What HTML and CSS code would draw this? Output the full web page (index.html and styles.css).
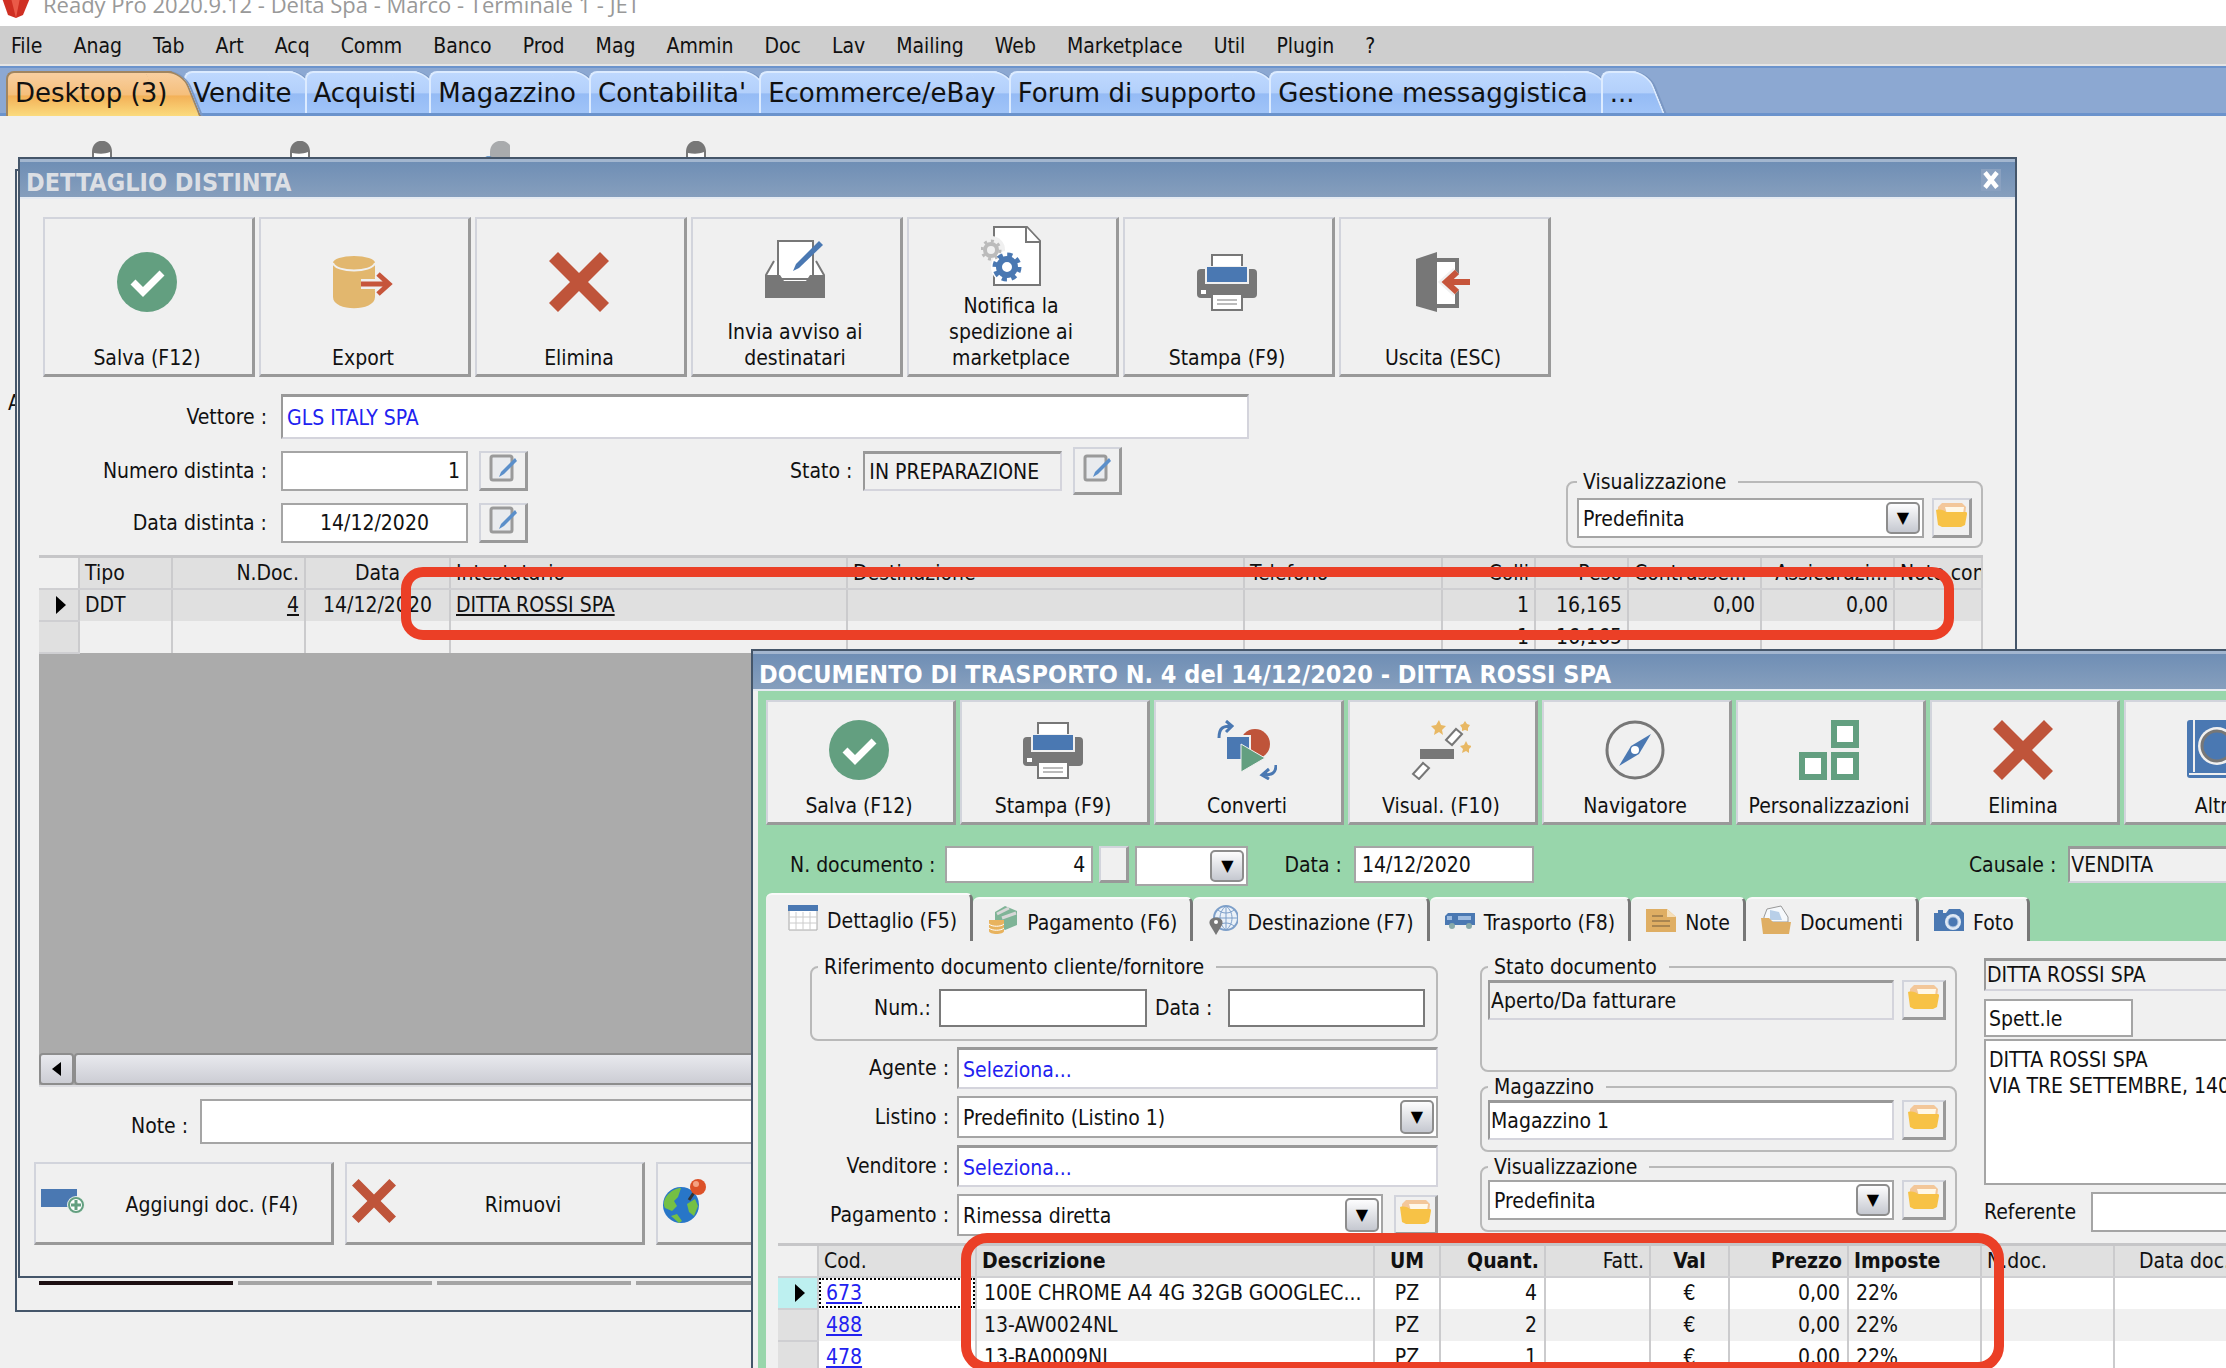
FILE: index.html
```html
<!DOCTYPE html>
<html lang="it">
<head>
  <meta charset="UTF-8" />
  <meta name="viewport" content="width=device-width, initial-scale=1.0"/>
  <title>Ready Pro 2020.9.12 - Delta Spa</title>
  <link rel="stylesheet" href="styles.css">
</head>
<body>
  <!-- shared icons -->
  <svg class="sprite" aria-hidden="true">
    <symbol id="i-check" viewBox="0 0 60 60">
      <circle cx="30" cy="30" r="30" fill="#639f80"/>
      <path d="M16 30l10 10 19-19" fill="none" stroke="#fff" stroke-width="7"/>
    </symbol>
    <symbol id="i-cross" viewBox="0 0 60 60">
      <path d="M9 0L30 21 51 0l9 9-21 21 21 21-9 9-21-21L9 60 0 51l21-21L0 9z" fill="#bf543a"/>
    </symbol>
    <symbol id="i-export" viewBox="0 0 60 60">
      <path d="M0 11v34c0 15 42 15 42 0V11z" fill="#e2b76e"/>
      <ellipse cx="21" cy="11" rx="21" ry="7" fill="#e2b76e"/>
      <path d="M0 11c3 10 39 10 42 0" fill="none" stroke="#f0f0f0" stroke-width="2"/>
      <path d="M28 32h27M45 22l11 10-11 10" fill="none" stroke="#f0f0f0" stroke-width="10"/>
      <path d="M28 32h27M45 22l11 10-11 10" fill="none" stroke="#c6553b" stroke-width="5"/>
    </symbol>
    <symbol id="i-tray" viewBox="0 0 60 60">
      <path d="M9 22L1 36v22h58V36l-8-14" fill="#fff" stroke="#777" stroke-width="2"/>
      <path d="M13 40V2h35v38z" fill="#fff" stroke="#777" stroke-width="2"/>
      <path d="M1 36h14l4 6h22l4-6h14v22H1z" fill="#777"/>
      <path d="M54 2l4 4-24 23-6 3 3-7z" fill="#4a78b2"/>
    </symbol>
    <symbol id="i-gears" viewBox="0 0 60 60">
      <path d="M13 1h33l13 14v44H13z" fill="#fff" stroke="#777" stroke-width="2"/>
      <path d="M45 1v15h14" fill="#fff" stroke="#777" stroke-width="2"/>
      <circle cx="10" cy="24" r="14" fill="#f0f0f0"/>
      <circle cx="26" cy="41" r="16" fill="#fff"/>
      <circle cx="10" cy="24" r="6" fill="none" stroke="#bbb" stroke-width="4"/>
      <circle cx="10" cy="24" r="9" fill="none" stroke="#bbb" stroke-width="3" stroke-dasharray="3 4"/>
      <circle cx="26" cy="41" r="8" fill="none" stroke="#4a78b2" stroke-width="6"/>
      <circle cx="26" cy="41" r="12" fill="none" stroke="#4a78b2" stroke-width="5" stroke-dasharray="5 4.4"/>
    </symbol>
    <symbol id="i-print" viewBox="0 0 60 60">
      <path d="M15 20V3h30v17" fill="#fff" stroke="#777" stroke-width="2"/>
      <rect x="0" y="17" width="60" height="29" rx="4" fill="#777"/>
      <path d="M8 14h44v18H8z" fill="#f0f0f0"/>
      <path d="M10 15h40v15H10z" fill="#4a78b2"/>
      <rect x="4" y="38" width="5" height="4" fill="#fff"/>
      <path d="M15 42h30v16H15z" fill="#fff" stroke="#777" stroke-width="2"/>
      <path d="M20 48h20M20 52h20" stroke="#bbb" stroke-width="2"/>
    </symbol>
    <symbol id="i-exit" viewBox="0 0 60 60">
      <path d="M20 8h24v46H20" fill="#fff" stroke="#777" stroke-width="4"/>
      <path d="M3 7L24 0v60L3 54z" fill="#777"/>
      <path d="M56 30H34M44 20L33 30l11 10" fill="none" stroke="#f0f0f0" stroke-width="11"/>
      <path d="M57 30H34M44 20L33 30l11 10" fill="none" stroke="#c6553b" stroke-width="6"/>
    </symbol>
    <symbol id="i-convert" viewBox="0 0 60 60">
      <circle cx="38" cy="24" r="15" fill="#bf543a"/>
      <path d="M9 16h24v24H9z" fill="#4a78b2" stroke="#f0f0f0" stroke-width="2"/>
      <path d="M24 24l24 14-24 14z" fill="#639f80" stroke="#f0f0f0"/>
      <path d="M2 18C2 8 6 6 14 6M9 1l6 5-6 6M59 45c0 8-4 10-12 10M52 49l-7 6 7 4" fill="none" stroke="#4a78b2" stroke-width="3"/>
    </symbol>
    <symbol id="i-wand" viewBox="0 0 60 60">
      <path d="M9 29h34v10H9z" fill="#777"/>
      <path d="M35 20l10-11 6 5-10 11zM2 54l10-11 6 5L8 59z" fill="#fff" stroke="#777" stroke-width="2"/>
      <path d="M28 0l2 5 5 1-4 4 1 5-4-3-5 3 1-5-4-4 5-1zM54 1l2 3 3 1-2 3v3l-3-1-3 1v-3l-2-3 3-1zM55 21l2 4 4 1-3 3v4l-3-2-4 2 1-4-3-3 4-1z" fill="#e8b864"/>
    </symbol>
    <symbol id="i-compass" viewBox="0 0 60 60">
      <circle cx="30" cy="30" r="28" fill="none" stroke="#777" stroke-width="3"/>
      <path d="M46 14L34 34 14 46l12-20z" fill="#4a78b2"/>
      <circle cx="30" cy="30" r="4" fill="#fff"/>
    </symbol>
    <symbol id="i-blocks" viewBox="0 0 60 60">
      <path d="M35 3h22v22H35zM3 35h22v22H3zM35 35h22v22H35z" fill="#fff" stroke="#639f80" stroke-width="6"/>
    </symbol>
    <symbol id="i-safe" viewBox="0 0 60 60">
      <rect width="60" height="58" rx="3" fill="#4a78b2"/>
      <path d="M7 0v52M2 54h58" stroke="#f0f0f0" stroke-width="2"/>
      <circle cx="30" cy="26" r="19" fill="#f0f0f0"/>
      <circle cx="30" cy="26" r="15" fill="#4a78b2" stroke="#777" stroke-width="3"/>
    </symbol>
    <symbol id="i-edit" viewBox="0 0 30 30">
      <rect x="3" y="2" width="21" height="24" rx="2" fill="#e9ebee" stroke="#9a9a9a" stroke-width="3"/>
      <path d="M27 4l2 3-13 13-5 3 2-5z" fill="#5b8fca"/>
    </symbol>
    <symbol id="i-folder" viewBox="0 0 32 26">
      <path d="M2 4l4-4h20l4 4-1 9H2z" fill="#f3c79a"/>
      <path d="M9 4h19l-1 7H11z" fill="#fff8e8"/>
      <path d="M0 7c4-1 8 0 10 2h20c1 0 1 1 1 2l-2 11-4 2H6l-4-2z" fill="#f7c246"/>
    </symbol>
    <symbol id="i-user" viewBox="0 0 30 30">
      <path d="M0 20c2-4 7-4 12 0v10H0z" fill="#4a86c4"/>
      <path d="M8 30V11C8-4 28-4 28 11v19z" fill="#777"/>
      <path d="M10 30V12c6 1 11 1 16-1v19z" fill="#fff"/>
    </symbol>
    <symbol id="i-user-grey" viewBox="0 0 30 30">
      <path d="M10 30V11C10-4 32-4 32 11v19z" fill="#a9abad"/>
      <path d="M0 22c3-9 14-9 17 0v8H0z" fill="#4a86c4"/>
    </symbol>
  </svg>

  <header class="titlebar">
    <svg class="logo" viewBox="0 0 28 20" aria-hidden="true"><path d="M0 0h28l-7 17-7 3-8-3z" fill="#cf2f22"/><path d="M9 0h9l-4 20z" fill="#ea5a48"/></svg>
    <span>Ready Pro 2020.9.12 - Delta Spa - Marco - Terminale 1 - JET</span>
  </header>

  <nav class="menu">
    <button>File</button><button>Anag</button><button>Tab</button><button>Art</button><button>Acq</button><button>Comm</button><button>Banco</button><button>Prod</button><button>Mag</button><button>Ammin</button><button>Doc</button><button>Lav</button><button>Mailing</button><button>Web</button><button>Marketplace</button><button>Util</button><button>Plugin</button><button>?</button>
  </nav>

  <nav class="tabs">
    <button class="tab active">Desktop (3)</button>
    <button class="tab">Vendite</button>
    <button class="tab">Acquisti</button>
    <button class="tab">Magazzino</button>
    <button class="tab">Contabilita'</button>
    <button class="tab">Ecommerce/eBay</button>
    <button class="tab">Forum di supporto</button>
    <button class="tab">Gestione messaggistica</button>
    <button class="tab">...</button>
  </nav>

  <main class="desktop">
    <div class="users">
      <svg><use href="#i-user"/></svg>
      <svg><use href="#i-user"/></svg>
      <svg><use href="#i-user-grey"/></svg>
      <svg><use href="#i-user"/></svg>
    </div>
    <span class="behind-label">A</span>

    <section class="window back">
      <div class="back-buttons"><i></i><i></i><i></i><i></i></div>
    </section>

    <!-- Dettaglio distinta -->
    <section class="window distinta">
      <div class="caption inactive">
        <h2>DETTAGLIO DISTINTA</h2>
        <button class="close" aria-label="Chiudi"><svg viewBox="0 0 12 12"><path d="M2 1l8 10M10 1L2 11" stroke="#fff" stroke-width="3"/></svg></button>
      </div>

      <div class="toolbar">
        <button class="tool"><svg><use href="#i-check"/></svg><span>Salva (F12)</span></button>
        <button class="tool"><svg><use href="#i-export"/></svg><span>Export</span></button>
        <button class="tool"><svg><use href="#i-cross"/></svg><span>Elimina</span></button>
        <button class="tool"><svg><use href="#i-tray"/></svg><span>Invia avviso ai<br>destinatari</span></button>
        <button class="tool"><svg><use href="#i-gears"/></svg><span>Notifica la<br>spedizione ai<br>marketplace</span></button>
        <button class="tool"><svg><use href="#i-print"/></svg><span>Stampa (F9)</span></button>
        <button class="tool"><svg><use href="#i-exit"/></svg><span>Uscita (ESC)</span></button>
      </div>

      <div class="distinta-head">
        <div class="distinta-form">
          <label for="vettore">Vettore :</label>
          <input id="vettore" class="sunken link-text tall" value="GLS ITALY SPA">
          <label for="numero">Numero distinta :</label>
          <div class="line">
            <input id="numero" class="short right" value="1">
            <button class="mini edit" aria-label="Modifica numero"><svg><use href="#i-edit"/></svg></button>
            <div class="line stato">
              <label for="stato">Stato :</label>
              <input id="stato" class="sunken grey" value="IN PREPARAZIONE" readonly>
              <button class="mini edit big" aria-label="Modifica stato"><svg><use href="#i-edit"/></svg></button>
            </div>
          </div>
          <label for="data">Data distinta :</label>
          <div class="line">
            <input id="data" class="short center" value="14/12/2020">
            <button class="mini edit" aria-label="Modifica data"><svg><use href="#i-edit"/></svg></button>
          </div>
        </div>
        <fieldset class="view">
          <legend>Visualizzazione</legend>
          <span class="combo"><select aria-label="Visualizzazione"><option>Predefinita</option></select></span>
          <button class="mini" aria-label="Apri"><svg><use href="#i-folder"/></svg></button>
        </fieldset>
      </div>

      <div class="grid-box">
        <table class="grid">
          <colgroup>
            <col class="w40"><col class="w93"><col class="w133"><col class="w145"><col class="w397"><col class="w397"><col class="w198"><col class="w93"><col class="w93"><col class="w133"><col class="w133"><col>
          </colgroup>
          <thead>
            <tr><th class="corner"></th><th>Tipo</th><th class="right">N.Doc.</th><th class="center">Data</th><th>Intestatario</th><th>Destinazione</th><th>Telefono</th><th class="right">Colli</th><th class="right">Peso</th><th>Contrasse...</th><th class="right">Assicurazi...</th><th>Note con</th></tr>
          </thead>
          <tbody>
            <tr class="selected"><th><i class="arrow"></i></th><td>DDT</td><td class="right"><u>4</u></td><td class="center">14/12/2020</td><td><u>DITTA ROSSI SPA</u></td><td></td><td></td><td class="right">1</td><td class="right">16,165</td><td class="right">0,00</td><td class="right">0,00</td><td></td></tr>
            <tr><th></th><td></td><td></td><td></td><td></td><td></td><td></td><td class="right">1</td><td class="right">16,165</td><td></td><td></td><td></td></tr>
          </tbody>
        </table>
        <div class="hscroll"><button aria-label="Scorri a sinistra"><i></i></button><div class="thumb"></div></div>
      </div>

      <div class="note-row">
        <label for="note">Note :</label>
        <input id="note" class="tall">
      </div>

      <div class="actions">
        <button class="action">
          <svg viewBox="0 0 44 44"><path d="M0 10h36v18H0z" fill="#4a78b2"/><circle cx="35" cy="26" r="9" fill="#e8efe9"/><circle cx="35" cy="26" r="7" fill="#fff" stroke="#639f80" stroke-width="2"/><path d="M35 21v10M30 26h10" stroke="#639f80" stroke-width="3"/></svg>
          <span>Aggiungi doc. (F4)</span>
        </button>
        <button class="action"><svg><use href="#i-cross"/></svg><span>Rimuovi</span></button>
        <button class="action">
          <svg viewBox="0 0 44 44"><circle cx="18" cy="26" r="18" fill="#2876c8"/><path d="M3 18c5-7 11-9 15-9l-3 9-4 4 3 5-5 5-7-3c-2-4-1-8 1-11zM24 25l8-5 3 7-4 10-5-4zM8 37l6-2 5 7-3 2z" fill="#74c044"/><path d="M26 21l8-12" stroke="#333" stroke-width="3"/><circle cx="35" cy="8" r="8" fill="#dc5128"/><circle cx="33" cy="5" r="3" fill="#f4a283"/></svg>
          <span></span>
        </button>
      </div>
    </section>

    <!-- Documento di trasporto -->
    <section class="window documento">
      <div class="caption">
        <h2>DOCUMENTO DI TRASPORTO N. 4 del 14/12/2020 - DITTA ROSSI SPA</h2>
      </div>
      <div class="green">
        <div class="toolbar">
          <button class="tool"><svg><use href="#i-check"/></svg><span>Salva (F12)</span></button>
          <button class="tool"><svg><use href="#i-print"/></svg><span>Stampa (F9)</span></button>
          <button class="tool"><svg><use href="#i-convert"/></svg><span>Converti</span></button>
          <button class="tool"><svg><use href="#i-wand"/></svg><span>Visual. (F10)</span></button>
          <button class="tool"><svg><use href="#i-compass"/></svg><span>Navigatore</span></button>
          <button class="tool"><svg><use href="#i-blocks"/></svg><span>Personalizzazioni</span></button>
          <button class="tool"><svg><use href="#i-cross"/></svg><span>Elimina</span></button>
          <button class="tool"><svg><use href="#i-safe"/></svg><span>Altro</span></button>
        </div>

        <div class="doc-row">
          <label for="ndoc">N. documento :</label>
          <input id="ndoc" class="ndoc right" value="4">
          <button class="mini blank" aria-label="Numerazione"></button>
          <span class="combo serie"><select aria-label="Serie"><option></option></select></span>
          <label for="ddata">Data :</label>
          <input id="ddata" class="ddata" value="14/12/2020">
          <label for="causale">Causale :</label>
          <input id="causale" class="sunken grey flush" value="VENDITA" readonly>
        </div>

        <div class="doc-tabs">
          <button class="doc-tab active"><svg viewBox="0 0 30 30"><path d="M1 3h28v24H1z" fill="#fff" stroke="#aaa"/><path d="M1 9v18M8 9v18M15 9v18M22 9v18M1 14h28M1 20h28" stroke="#ccc"/><path d="M0 2h30v6H0z" fill="#4a78b2"/></svg><span>Dettaglio (F5)</span></button>
          <button class="doc-tab"><svg viewBox="0 0 30 30"><path d="M7 7l10-6 12 5v14l-12 5-10-7z" fill="#7fb497"/><path d="M9 9l12-6M14 13l14-5" stroke="#d7d7d7" stroke-width="3"/><path d="M1 15h15v11c0 4-15 4-15 0z" fill="#e8b35e"/><path d="M1 19c3 3 12 3 15 0M1 23c3 3 12 3 15 0" fill="none" stroke="#fff"/></svg><span>Pagamento (F6)</span></button>
          <button class="doc-tab"><svg viewBox="0 0 30 30"><circle cx="18" cy="13" r="12" fill="#eaf1f8" stroke="#7d9fc9" stroke-width="2"/><path d="M6 13h24M18 1v24M10 5c5 4 11 4 16 0M10 21c5-4 11-4 16 0M18 1c-8 6-8 18 0 24M18 1c8 6 8 18 0 24" fill="none" stroke="#7d9fc9"/><path d="M8 30L2 20c-4-10 16-10 12 0z" fill="#777"/><circle cx="8" cy="17" r="2" fill="#fff"/></svg><span>Destinazione (F7)</span></button>
          <button class="doc-tab"><svg viewBox="0 0 30 30"><path d="M10 8h20v12H10zM0 11l3-3h7v12H0z" fill="#4a78b2"/><path d="M2 11h5v4H2zM13 11h13v4H13z" fill="#9dbbe0"/><circle cx="7" cy="21" r="3" fill="#8aa"/><circle cx="24" cy="21" r="3" fill="#8aa"/></svg><span>Trasporto (F8)</span></button>
          <button class="doc-tab"><svg viewBox="0 0 30 30"><path d="M0 4h21l9 8v15H0z" fill="#dfae63"/><path d="M21 4v8h9z" fill="#f6dfb8"/><path d="M6 11h11M6 16h18M6 21h18" stroke="#a98550" stroke-width="2"/></svg><span>Note</span></button>
          <button class="doc-tab"><svg viewBox="0 0 30 30"><path d="M3 12L6 4l14-3 7 11v5H3z" fill="#f6f9fc" stroke="#999"/><path d="M9 5l9 2 3 8H9z" fill="#b8cfe8"/><path d="M0 13h8l4 4h18l-2 12H2z" fill="#dfae63"/></svg><span>Documenti</span></button>
          <button class="doc-tab"><svg viewBox="0 0 30 30"><path d="M0 8h4V5h5v3h3l3-4h11l4 4v18H0z" fill="#4a78b2"/><circle cx="19" cy="17" r="8" fill="#dfe9f4"/><circle cx="19" cy="17" r="5" fill="#4a78b2" stroke="#aac3e2"/></svg><span>Foto</span></button>
        </div>

        <div class="panel">
          <div class="panel-form">
            <div class="col-ref">
              <fieldset class="ref">
                <legend>Riferimento documento cliente/fornitore</legend>
                <label for="rnum">Num.:</label>
                <input id="rnum" class="dark">
                <label for="rdata">Data :</label>
                <input id="rdata" class="dark">
              </fieldset>
              <div class="rows">
                <label for="agente">Agente :</label>
                <input id="agente" class="sunken link-text" value="Seleziona...">
                <label for="listino">Listino :</label>
                <span class="combo"><select id="listino"><option>Predefinito (Listino 1)</option></select></span>
                <label for="venditore">Venditore :</label>
                <input id="venditore" class="sunken link-text" value="Seleziona...">
                <label for="pagamento">Pagamento :</label>
                <div class="line">
                  <span class="combo"><select id="pagamento"><option>Rimessa diretta</option></select></span>
                  <button class="mini" aria-label="Apri"><svg><use href="#i-folder"/></svg></button>
                </div>
              </div>
            </div>

            <div class="col-state">
              <fieldset class="state">
                <legend>Stato documento</legend>
                <input class="sunken grey flush" aria-label="Stato documento" value="Aperto/Da fatturare" readonly>
                <button class="mini" aria-label="Apri"><svg><use href="#i-folder"/></svg></button>
              </fieldset>
              <fieldset>
                <legend>Magazzino</legend>
                <input class="sunken flush" aria-label="Magazzino" value="Magazzino 1">
                <button class="mini" aria-label="Apri"><svg><use href="#i-folder"/></svg></button>
              </fieldset>
              <fieldset>
                <legend>Visualizzazione</legend>
                <span class="combo"><select aria-label="Visualizzazione"><option>Predefinita</option></select></span>
                <button class="mini" aria-label="Apri"><svg><use href="#i-folder"/></svg></button>
              </fieldset>
            </div>

            <div class="col-customer">
              <input class="sunken grey flush name" aria-label="Cliente" value="DITTA ROSSI SPA" readonly>
              <input class="spett" aria-label="Titolo" value="Spett.le">
              <textarea aria-label="Indirizzo">DITTA ROSSI SPA
VIA TRE SETTEMBRE, 140</textarea>
              <div class="line">
                <label for="referente">Referente</label>
                <input id="referente">
              </div>
            </div>
          </div>

          <table class="grid items">
            <colgroup>
              <col class="w40"><col class="w158"><col class="w398"><col class="w66"><col class="w105"><col class="w105"><col class="w79"><col class="w119"><col class="w133"><col class="w133"><col>
            </colgroup>
            <thead>
              <tr><th class="corner"></th><th>Cod.</th><th><b>Descrizione</b></th><th class="center"><b>UM</b></th><th class="right"><b>Quant.</b></th><th class="right">Fatt.</th><th class="center"><b>Val</b></th><th class="right"><b>Prezzo</b></th><th><b>Imposte</b></th><th>N.doc.</th><th class="doc-date">Data doc.</th></tr>
            </thead>
            <tbody>
              <tr><th class="current"><i class="arrow"></i></th><td class="focus"><a href="#">673</a></td><td>100E CHROME A4 4G 32GB GOOGLEC...</td><td class="center">PZ</td><td class="right">4</td><td></td><td class="center">€</td><td class="right">0,00</td><td>22%</td><td></td><td></td></tr>
              <tr><th></th><td><a href="#">488</a></td><td>13-AW0024NL</td><td class="center">PZ</td><td class="right">2</td><td></td><td class="center">€</td><td class="right">0,00</td><td>22%</td><td></td><td></td></tr>
              <tr><th></th><td><a href="#">478</a></td><td>13-BA0009NL</td><td class="center">PZ</td><td class="right">1</td><td></td><td class="center">€</td><td class="right">0,00</td><td>22%</td><td></td><td></td></tr>
            </tbody>
          </table>
        </div>
      </div>
    </section>

    <div class="mark mark-row"></div>
    <div class="mark mark-items"></div>
  </main>
</body>
</html>
```
FILE: styles.css
```css
* {
  box-sizing: border-box;
}
body {
  margin: 0;
  height: 100vh;
  display: flex;
  flex-direction: column;
  overflow: hidden;
  background: #f0f0f0;
  color: #111;
  font-family: "DejaVu Sans Condensed", "DejaVu Sans", sans-serif;
  font-size: 21px;
  line-height: 26px;
}
button, input, select, textarea {
  font: inherit;
  color: inherit;
  margin: 0;
}
button {
  padding: 0;
  background: none;
  border: none;
}
.sprite {
  display: none;
}
.right {
  text-align: right;
}
.center {
  text-align: center;
}

/* application frame */
.titlebar {
  height: 26px;
  display: flex;
  align-items: flex-end;
  gap: 13px;
  padding: 0 2px 8px;
  background: #fff;
  color: #999;
  font-family: "Open Sans", sans-serif;
  font-size: 22px;
  overflow: hidden;
}
.titlebar span {
  padding-bottom: 1px;
}
.logo {
  width: 28px;
  height: 20px;
}
.menu {
  height: 40px;
  display: flex;
  align-items: center;
  gap: 31px;
  padding: 2px 11px 0;
  background: #cecece;
  border-bottom: 2px solid #e4e4e4;
}
.tabs {
  height: 50px;
  display: flex;
  padding: 3px 6px 0;
  background: #8ca8d2;
  border-top: 2px solid #6b93cc;
  border-bottom: 3px solid #6b93cc;
}
.tab {
  position: relative;
  z-index: 1;
  isolation: isolate;
  padding: 2px 13px 0 9px;
  font-family: "DejaVu Sans", sans-serif;
  font-size: 26px;
  white-space: nowrap;
}
.tab::before, .tab::after {
  content: "";
  position: absolute;
  z-index: -1;
  top: 0;
  bottom: 0;
  background: linear-gradient(#bed8fe, #b3d0fb 50%, #95bbf5 52%, #a0c4f8);
  border-top: 2px solid #dcebff;
}
.tab::before {
  left: 0;
  right: 12px;
  border-left: 2px solid #dcebff;
  border-radius: 8px 0 0 0;
}
.tab::after {
  width: 36px;
  right: -8px;
  border-right: 2px solid #dcebff;
  border-radius: 0 16px 0 0;
  transform: skewX(22deg);
  box-shadow: 2px 0 0 #7b98c4;
}
.tab.active {
  z-index: 2;
  padding-right: 17px;
}
.tab.active::before, .tab.active::after {
  bottom: -3px;
  background: linear-gradient(#f8cfa0, #f5bf7c 50%, #f3b158 54%, #fbdb7e);
  border-color: #a08560;
}

.desktop {
  flex: 1;
  position: relative;
  overflow: hidden;
}
.users {
  display: flex;
  gap: 168px;
  padding: 25px 0 0 84px;
}
.users svg {
  width: 30px;
  height: 30px;
}
.behind-label {
  position: absolute;
  left: 8px;
  top: 274px;
}

/* floating windows */
.window {
  position: absolute;
  background: #f0f0f0;
  border: 2px solid #45566a;
}
.back {
  left: 15px;
  top: 53px;
  width: 1900px;
  height: 1143px;
  display: flex;
  align-items: flex-end;
  padding: 0 22px 25px;
}
.back-buttons {
  display: flex;
  gap: 5px;
}
.back-buttons i {
  width: 194px;
  height: 12px;
  border-bottom: 4px solid #a5a5a5;
}
.back-buttons i:first-child {
  border-color: #1c0f12;
}
.distinta {
  left: 18px;
  top: 41px;
  width: 1999px;
  padding-bottom: 31px;
}
.documento {
  left: 751px;
  top: 533px;
  right: -60px;
}
.caption {
  height: 40px;
  display: flex;
  align-items: center;
  justify-content: space-between;
  padding: 7px 14px 0 6px;
  color: #fff;
  background: linear-gradient(#6f8eb5, #869fbd);
  border-top: 3px solid #a3b6cf;
  border-bottom: 2px solid #e6ebf2;
}
.caption.inactive {
  color: #dcdfe4;
}
.caption h2 {
  margin: 0;
  font-size: 25px;
}
.close {
  width: 20px;
  height: 22px;
  margin-bottom: 6px;
  background: #8aa1c0;
}
.close svg {
  display: block;
  width: 18px;
  height: 18px;
  margin: 0 auto;
}

/* toolbars */
.toolbar {
  display: flex;
  gap: 4px;
  padding: 18px 23px 17px;
}
.tool {
  width: 212px;
  height: 160px;
  flex: none;
  display: flex;
  flex-direction: column;
  align-items: center;
  padding: 0 3px 3px 0;
  background: #f0f0f0;
  border: 2px solid #d2d4dc;
  border-right: 3px solid #999;
  border-bottom: 3px solid #999;
}
.tool svg {
  width: 60px;
  height: 60px;
  margin: auto;
}

/* fields */
input, select, textarea {
  height: 40px;
  min-width: 0;
  padding: 0 6px;
  background: #fff;
  border: 2px solid #a5a5a5;
  border-radius: 0;
  outline: none;
}
.tall {
  height: 45px;
}
.sunken {
  border-color: #999 #d4d4dc #d4d4dc #999;
  border-top-width: 3px;
}
.grey {
  background: #f0f0f0;
}
.flush {
  padding: 0 1px;
}
.dark {
  border-color: #7a7a7a;
}
.link-text {
  padding: 2px 4px 0;
  color: #2222f0;
}
.line {
  display: flex;
  align-items: center;
}
.combo {
  position: relative;
  display: flex;
}
.combo select {
  width: 100%;
  padding: 2px 4px 0;
  appearance: none;
}
.combo::after {
  content: "▼";
  position: absolute;
  right: 4px;
  top: 4px;
  bottom: 4px;
  width: 30px;
  display: flex;
  align-items: center;
  justify-content: center;
  background: linear-gradient(#fdfdfe, #c5c8d0);
  border: 2px solid #8d8d8d;
  border-radius: 5px;
  color: #000;
  font-family: "DejaVu Sans", sans-serif;
  font-size: 16px;
  pointer-events: none;
}
.mini {
  width: 44px;
  height: 40px;
  flex: none;
  display: flex;
  align-items: center;
  justify-content: center;
  padding-bottom: 4px;
  background: #f0f0f0;
  border: 2px solid #d2d4dc;
  border-right: 3px solid #999;
  border-bottom: 3px solid #999;
}
.mini svg {
  width: 32px;
  height: 26px;
}
.mini.edit {
  width: 49px;
}
.mini.edit svg {
  width: 30px;
  height: 30px;
}
.mini.big {
  height: 48px;
  margin: -4px 0;
}
fieldset {
  min-width: 0;
  display: flex;
  gap: 8px;
  margin: 0;
  padding: 0 9px 10px 6px;
  border: 2px solid #b9b9b9;
  border-radius: 8px;
}
legend {
  padding: 0 12px 0 6px;
}
fieldset .combo, fieldset > input {
  flex: 1;
}

/* dettaglio distinta */
.distinta-head {
  display: flex;
  justify-content: space-between;
  align-items: flex-end;
  padding: 0 32px 7px 0;
}
.distinta-form {
  width: 1229px;
  display: grid;
  grid-template-columns: 247px 1fr;
  gap: 12px 14px;
  align-items: center;
  padding-bottom: 5px;
}
.distinta-form > label {
  text-align: right;
}
.distinta-form .line {
  gap: 11px;
}
.short {
  width: 187px;
}
.stato {
  margin-left: 251px;
}
.stato input {
  width: 199px;
  padding: 0 4px;
}
.view {
  width: 417px;
  padding: 3px 9px 8px;
}
.view .mini {
  width: 40px;
}
.grid-box {
  height: 532px;
  display: flex;
  flex-direction: column;
  justify-content: space-between;
  margin: 0 32px 12px 19px;
  background: #ababab;
}
.grid {
  width: 100%;
  table-layout: fixed;
  border-collapse: collapse;
  border-top: 3px solid #c6c6c8;
}
.grid th, .grid td {
  height: 32px;
  padding: 0 5px;
  overflow: hidden;
  white-space: nowrap;
  font-weight: normal;
  text-align: left;
  border-right: 2px solid #cbcbcd;
}
.grid .right {
  text-align: right;
}
.grid .center {
  text-align: center;
}
.grid th {
  background: #e0e0e0;
  border-bottom: 2px solid #cfcfd2;
}
.grid th.corner {
  background: #f0f0f0;
}
.grid td {
  background: #f0f0f0;
}
.grid .selected td {
  background: #e0e0e0;
}
.arrow {
  display: block;
  width: 0;
  margin-left: 12px;
  border: 9px solid transparent;
  border-left: 10px solid #000;
  border-right: 0;
}
.w40 { width: 40px; }
.w66 { width: 66px; }
.w79 { width: 79px; }
.w93 { width: 93px; }
.w105 { width: 105px; }
.w119 { width: 119px; }
.w133 { width: 133px; }
.w145 { width: 145px; }
.w158 { width: 158px; }
.w198 { width: 198px; }
.w397 { width: 397px; }
.w398 { width: 398px; }
.hscroll {
  height: 34px;
  display: flex;
  border-bottom: 2px solid #dcdce0;
}
.hscroll button, .thumb {
  background: linear-gradient(#e8e9ee, #cccdd4);
  border: 2px solid #8d8d8d;
  border-radius: 4px;
}
.hscroll button {
  width: 35px;
  display: flex;
  align-items: center;
  justify-content: center;
}
.hscroll i {
  border: 7px solid transparent;
  border-right: 9px solid #000;
  border-left: 0;
}
.thumb {
  flex: 1;
}
.note-row {
  display: flex;
  align-items: center;
  gap: 12px;
  padding: 0 32px 18px 111px;
}
.note-row label {
  padding-top: 8px;
}
.note-row input {
  flex: 1;
}
.actions {
  display: flex;
  gap: 11px;
  padding-left: 14px;
}
.action {
  width: 300px;
  height: 83px;
  display: flex;
  align-items: center;
  padding: 0 0 4px 5px;
  border: 2px solid #d2d4dc;
  border-right: 3px solid #999;
  border-bottom: 3px solid #999;
}
.action svg {
  width: 44px;
  height: 44px;
}
.action span {
  flex: 1;
  padding: 8px 0 0 8px;
}

/* documento di trasporto */
.green {
  margin-left: 5px;
  background: #98d6ab;
}
.green .toolbar {
  padding: 9px 8px 21px;
}
.green .tool {
  width: 190px;
  height: 125px;
}
.green .tool svg {
  margin: auto auto 13px;
}
.doc-row {
  height: 40px;
  display: flex;
  align-items: flex-start;
  padding-left: 32px;
}
.doc-row label {
  line-height: 38px;
}
.doc-row > input {
  height: 37px;
}
.doc-row .ndoc {
  width: 148px;
  margin: 0 6px 0 10px;
}
.mini.blank {
  width: 30px;
  height: 37px;
}
.serie {
  width: 113px;
  margin: 0 36px 0 6px;
}
.ddata {
  width: 180px;
  margin: 0 435px 0 12px;
}
.doc-row > .grey {
  flex: 1;
  margin-left: 12px;
}
.doc-tabs {
  display: flex;
  align-items: flex-end;
  padding: 7px 8px 0;
}
.doc-tab {
  height: 44px;
  display: flex;
  align-items: center;
  gap: 9px;
  padding: 0 13px 0 15px;
  background: #f0f0f0;
  border-top: 2px solid #fafafa;
  border-right: 3px solid #777;
  border-radius: 6px 6px 0 0;
  white-space: nowrap;
}
.doc-tab.active {
  height: 48px;
  padding-left: 22px;
}
.doc-tab svg {
  width: 30px;
  height: 30px;
}
.doc-tab span {
  padding-top: 6px;
}
.panel {
  margin-left: 8px;
  background: #f0f0f0;
}
.panel-form {
  display: grid;
  grid-template-columns: 628px 477px 1fr;
  padding: 13px 0 7px 44px;
}
.col-ref fieldset {
  align-items: center;
  padding: 9px 11px 12px 6px;
}
.col-ref fieldset label:first-of-type {
  margin-left: 56px;
}
.col-ref fieldset input {
  height: 38px;
  flex: 0 0 208px;
}
.col-ref fieldset input:last-of-type {
  flex-basis: 197px;
  margin-left: auto;
}
.rows {
  display: grid;
  grid-template-columns: 139px 1fr;
  gap: 7px 8px;
  align-items: center;
  margin-top: 6px;
}
.rows label {
  text-align: right;
}
.rows input, .rows select {
  width: 100%;
  height: 42px;
}
.rows .line {
  gap: 11px;
}
.rows .line .combo {
  flex: 1;
}
.col-state {
  display: flex;
  flex-direction: column;
  gap: 2px;
  margin: 0 0 0 42px;
  width: 477px;
}
.col-state .state {
  height: 118px;
}
.col-customer {
  display: flex;
  flex-direction: column;
  align-items: stretch;
  margin: 4px 0 0 69px;
}
.col-customer .name {
  height: 33px;
  margin-bottom: 8px;
}
.col-customer .spett {
  width: 149px;
  height: 38px;
  padding: 2px 3px 0;
  margin-bottom: 2px;
}
.col-customer textarea {
  height: 146px;
  padding: 6px 3px;
  margin-bottom: 7px;
  resize: none;
}
.col-customer .line {
  gap: 15px;
}
.col-customer .line input {
  flex: 1;
}
.items {
  width: auto;
  margin-left: 12px;
  min-width: 100%;
}
.items td {
  background: #fff;
  padding: 0 7px;
}
.items tr:nth-child(even) td {
  background: #f0f0f0;
}
.items th.current {
  background: #bdf0f0;
}
.items .focus {
  outline: 2px dotted #000;
  outline-offset: -3px;
}
.items a {
  color: #2222f0;
}
.grid .doc-date {
  padding-left: 24px;
}

/* red marker boxes */
.mark {
  position: absolute;
  border: 10px solid #eb3f26;
}
.mark-row {
  left: 401px;
  top: 451px;
  width: 1553px;
  height: 73px;
  border-radius: 22px;
}
.mark-items {
  left: 961px;
  top: 1117px;
  width: 1043px;
  height: 139px;
  border-radius: 26px;
}
```
